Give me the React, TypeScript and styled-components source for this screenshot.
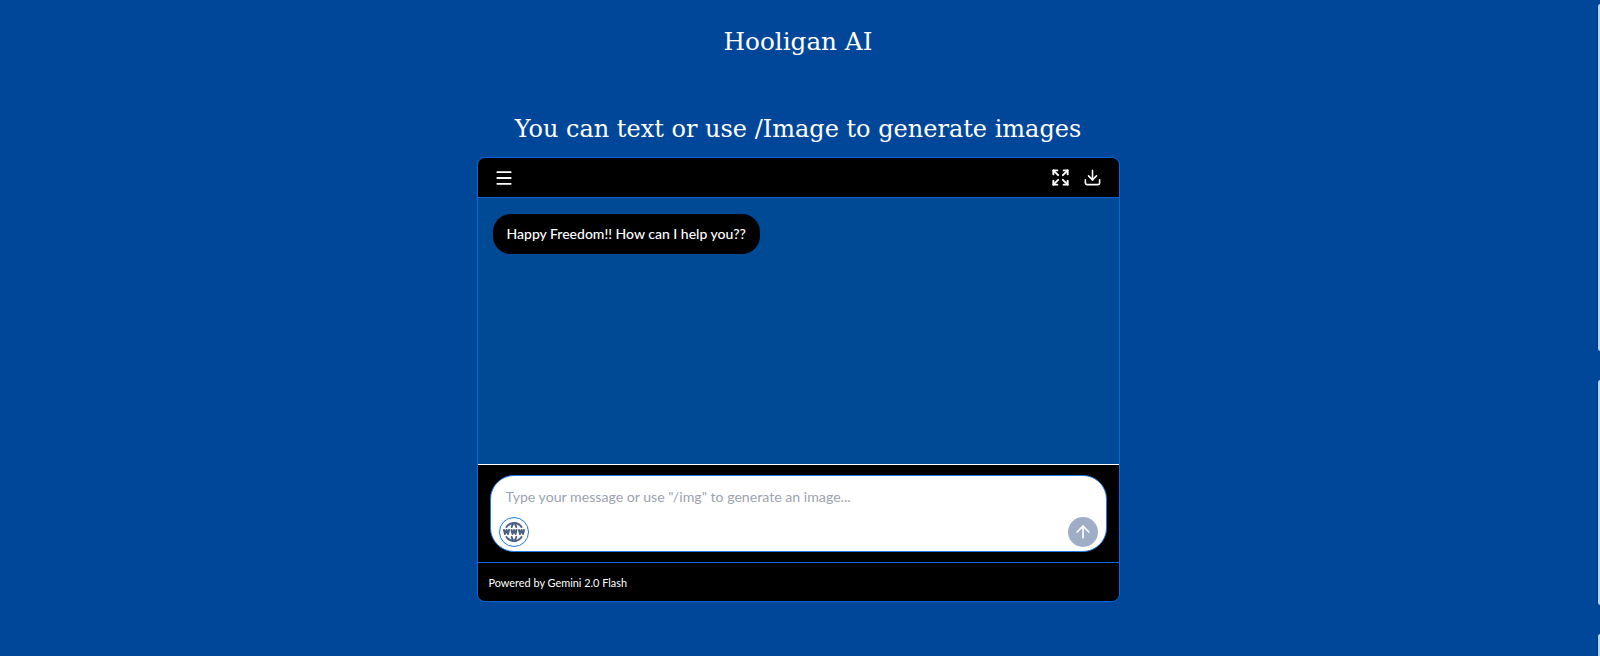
import React from "react";
import styled, { createGlobalStyle } from "styled-components";
import { ArrowUp, Download, Expand, Menu } from "lucide-react";
import { TbWorldWww } from "react-icons/tb";

const GlobalStyle = createGlobalStyle`
  html, body {
    margin: 0;
    padding: 0;
    height: 100%;
    background-color: #004799;
    overflow: hidden;
  }
`;

const Page = styled.div`
  display: flex;
  flex-direction: column;
  align-items: center;
  box-sizing: border-box;
  height: 656px;
  padding-right: 4px;
  font-family: "Lato", "Noto Sans", sans-serif;
`;

const Title = styled.h1`
  margin: 0;
  padding-top: 26px;
  font-family: "DejaVu Serif", "Liberation Serif", serif;
  font-size: 24.7px;
  line-height: 32px;
  font-weight: 400;
  color: #fff;
`;

const Subtitle = styled.h2`
  margin: 0;
  padding-top: 55px;
  font-family: "DejaVu Serif", "Liberation Serif", serif;
  font-size: 24px;
  line-height: 32px;
  font-weight: 400;
  color: #fff;
`;

const ChatPanel = styled.div`
  display: flex;
  flex-direction: column;
  box-sizing: border-box;
  width: 643px;
  height: 445px;
  margin-top: 12px;
  border: 1px solid #0d66d6;
  border-radius: 8px;
  overflow: hidden;
`;

const Header = styled.div`
  display: flex;
  align-items: center;
  justify-content: space-between;
  box-sizing: border-box;
  flex: 0 0 40px;
  padding: 0 17px 0 16px;
  background-color: #000;
  border-bottom: 1px solid #0d66d6;
`;

const HeaderActions = styled.div`
  display: flex;
  align-items: center;
  gap: 13px;
`;

const IconButton = styled.button`
  display: flex;
  padding: 0;
  border: none;
  background: none;
  color: #fff;
  cursor: pointer;
`;

const Messages = styled.div`
  flex: 1;
  padding: 16px 15px;
  background-color: #004995;
  border-bottom: 1px solid #fff;
`;

const Bubble = styled.div`
  display: inline-block;
  padding: 10px 14px;
  border-radius: 18px;
  background-color: #000;
  color: #fff;
  font-size: 14px;
  font-weight: 500;
  line-height: 20px;
`;

const Composer = styled.div`
  flex: 0 0 auto;
  padding: 10px 12px;
  background-color: #000;
  border-bottom: 1px solid #0d6de0;
`;

const InputBox = styled.div`
  display: flex;
  flex-direction: column;
  box-sizing: border-box;
  height: 77px;
  padding: 11px 8px 4px 8px;
  background-color: #fff;
  border: 1px solid #1d7ae8;
  border-radius: 24px;
`;

const MessageInput = styled.textarea`
  flex: 1;
  padding: 0 7px;
  border: none;
  outline: none;
  resize: none;
  background: none;
  font-family: inherit;
  font-size: 14.15px;
  line-height: 20px;

  &::placeholder {
    color: #9ca3af;
    opacity: 1;
  }
`;

const InputActions = styled.div`
  display: flex;
  align-items: center;
  justify-content: space-between;
`;

const WebButton = styled.button`
  display: flex;
  align-items: center;
  justify-content: center;
  box-sizing: border-box;
  width: 30px;
  height: 30px;
  padding: 0;
  border: 1px solid #1d7ae8;
  border-radius: 50%;
  background-color: #fff;
  color: #4b5f80;
  cursor: pointer;
`;

const SendButton = styled.button`
  display: flex;
  align-items: center;
  justify-content: center;
  width: 30px;
  height: 30px;
  padding: 0;
  border: none;
  border-radius: 50%;
  background-color: #9fadc6;
  color: #fff;
`;

const Footer = styled.div`
  display: flex;
  align-items: center;
  flex: 0 0 38px;
  padding: 0 11px;
  background-color: #000;
  color: #fff;
  font-size: 10.9px;
`;

const EdgeTabs = styled.div`
  position: fixed;
  top: 4px;
  right: 0;
  display: flex;
  flex-direction: column;
  gap: 29px;
`;

const EdgeTab = styled.div<{ $height: number }>`
  box-sizing: border-box;
  width: 3px;
  height: ${({ $height }) => $height}px;
  background-color: #b5d8ff;
  border-left: 1px solid #003a84;
  border-radius: 3px 0 0 3px;
`;

export default function App() {
  return (
    <>
      <GlobalStyle />
      <Page>
        <Title>Hooligan AI</Title>
        <Subtitle>You can text or use /Image to generate images</Subtitle>
        <ChatPanel>
          <Header>
            <IconButton>
              <Menu size={20} strokeWidth={2.2} />
            </IconButton>
            <HeaderActions>
              <IconButton>
                <Expand size={19} strokeWidth={2.5} />
              </IconButton>
              <IconButton>
                <Download size={19} />
              </IconButton>
            </HeaderActions>
          </Header>
          <Messages>
            <Bubble>Happy Freedom!! How can I help you??</Bubble>
          </Messages>
          <Composer>
            <InputBox>
              <MessageInput placeholder={'Type your message or use "/img" to generate an image...'} />
              <InputActions>
                <WebButton>
                  <TbWorldWww size={24} />
                </WebButton>
                <SendButton>
                  <ArrowUp size={20} />
                </SendButton>
              </InputActions>
            </InputBox>
          </Composer>
          <Footer>Powered by Gemini 2.0 Flash</Footer>
        </ChatPanel>
      </Page>
      <EdgeTabs>
        <EdgeTab $height={347} />
        <EdgeTab $height={225} />
        <EdgeTab $height={225} />
      </EdgeTabs>
    </>
  );
}
